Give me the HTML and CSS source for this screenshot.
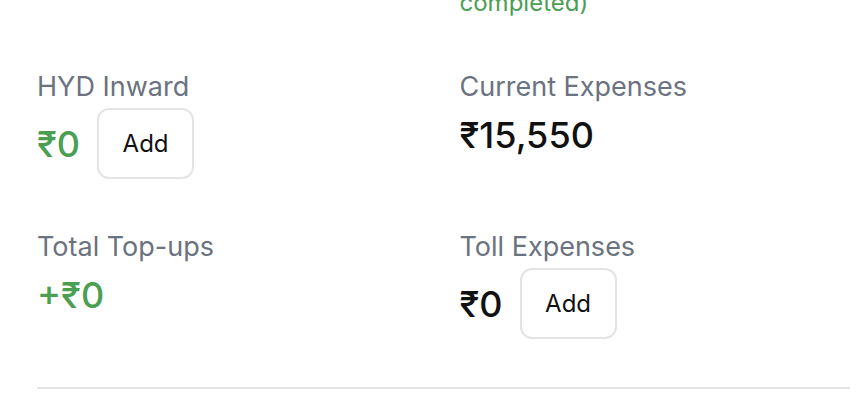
FILE: index.html
```html
<!DOCTYPE html>
<html>
<head>
<meta charset="utf-8">
<link rel="stylesheet" href="styles.css">
</head>
<body>
<div class="panel">
  <div class="grid">
    <div class="cell"></div>
    <div class="cell"><div class="note">completed)</div></div>

    <div class="cell">
      <div class="label">HYD Inward</div>
      <div class="value-row">
        <span class="value green">₹0</span>
        <button class="add">Add</button>
      </div>
    </div>
    <div class="cell">
      <div class="label">Current Expenses</div>
      <div class="value-row">
        <span class="value">₹15,550</span>
      </div>
    </div>

    <div class="cell">
      <div class="label">Total Top-ups</div>
      <div class="value-row">
        <span class="value green">+₹0</span>
      </div>
    </div>
    <div class="cell">
      <div class="label">Toll Expenses</div>
      <div class="value-row">
        <span class="value">₹0</span>
        <button class="add">Add</button>
      </div>
    </div>
  </div>
  <div class="divider"></div>
</div>
</body>
</html>
```
FILE: styles.css
```css
html, body {
  margin: 0;
  padding: 0;
  background: #ffffff;
  overflow: hidden;
}
body {
  font-family: Inter, "Noto Sans", "DejaVu Sans", sans-serif;
  color: #111111;
}
.panel {
  padding: 0 6px 0 37px;
}
.grid {
  display: grid;
  grid-template-columns: 1fr 1fr;
  column-gap: 32px;
  row-gap: 52px;
  margin-top: -13px;
}
.note {
  font-size: 24px;
  line-height: 32px;
  color: #4a9f52;
}
.label {
  font-size: 27px;
  line-height: 32px;
  color: #6b7280;
}
.value-row {
  display: flex;
  align-items: center;
  gap: 17px;
  margin-top: 5px;
}
.value {
  font-size: 36px;
  line-height: 54px;
  font-weight: 500;
  color: #111111;
}
.value.green {
  color: #4a9f52;
}
.add {
  width: 97px;
  height: 71px;
  border: 2px solid #e4e4e4;
  border-radius: 12px;
  background: #ffffff;
  font-family: Inter, "Noto Sans", sans-serif;
  font-size: 24px;
  color: #111111;
  padding: 0;
}
.divider {
  height: 2px;
  background: #e4e4e4;
  margin-top: 48px;
}
```
